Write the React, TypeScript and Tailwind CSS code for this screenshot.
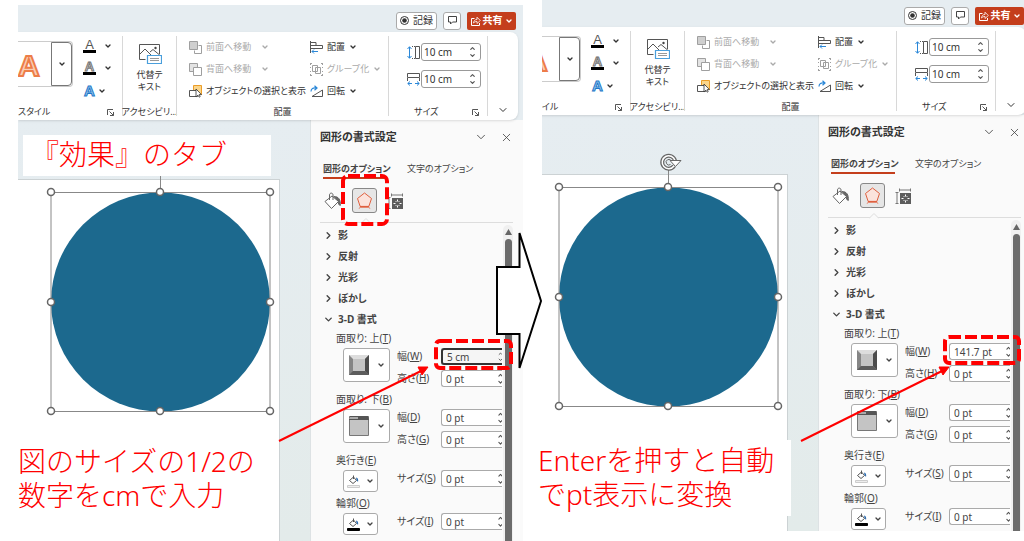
import { useId, type ReactNode } from "react";
import { ChevronDown, ChevronRight, ChevronUp, X } from "lucide-react";

const Chevron = ({ className = "" }: { className?: string }) => (
  <ChevronDown size={8} strokeWidth={4} className={`shrink-0 ${className}`} />
);

const LauncherIcon = () => (
  <svg width="7" height="7" viewBox="0 0 7 7" fill="none" stroke="#555">
    <path d="M.5 6V.5H6M2.5 2.5l4 4M6.5 3v3.5H3" />
  </svg>
);

const BringFrontIcon = () => (
  <svg width="13" height="13" viewBox="0 0 13 13" fill="none" stroke="#888">
    <path d="M9.5 4.5h3v8h-7v-3" />
    <path d="M.5.5h8v8h-8z" fill="#c4c4c4" />
  </svg>
);

const SendBackIcon = () => (
  <svg width="13" height="13" viewBox="0 0 13 13" fill="none" stroke="#888">
    <path d="M.5.5h8v8h-8z" fill="#ddd" />
    <path d="M4.5 4.5h8v8h-8z" fill="#fff" />
  </svg>
);

const SelectionIcon = () => (
  <svg width="13" height="13" viewBox="0 0 13 13" fill="none">
    <path d="M4.5.5h8v9h-8z" fill="#fbd58a" stroke="#eb9d28" />
    <path d="M.5 5.500h8v6h-8z" fill="#fff" stroke="#555" />
    <path d="M7 4v8l2-1.800 1.200 2 1-.6-1-2h2.300z" fill="#fff" stroke="#333" strokeWidth=".8" />
  </svg>
);

const AlignIcon = () => (
  <svg width="13" height="13" viewBox="0 0 13 13" fill="none" stroke="#555">
    <path d="M.5 0v12M1 1.500h5v3H1M1 4.500h11.500v3H1" />
    <path d="M8 10.500H2M4 8.500l-2 2 2 2" stroke="#2b88d8" />
  </svg>
);

const GroupIcon = () => (
  <svg width="13" height="13" viewBox="0 0 13 13" fill="none" stroke="#888">
    <path d="M2.500 2.500h5v6h-5zM5.500 4.500h5v6h-5z" />
    <path d="M0 .5h2M.5 0v2M11 .5h2M12.500 0v2M0 12.500h2M.5 11v2M11 12.500h2M12.500 11v2M.5 4v1M.5 8v1M12.500 4v1M12.500 8v1" />
  </svg>
);

const RotateIcon = () => (
  <svg width="13" height="13" viewBox="0 0 13 13" fill="none">
    <path d="M2 11.500h10.500V5z" stroke="#555" />
    <path d="M1 6.500C1 3.500 3 2.500 6.500 3M4.500.8l2.500 2.200-2.500 2.200" stroke="#2b88d8" strokeWidth="1.200" />
  </svg>
);

const AltTextIcon = () => (
  <svg width="24" height="22" viewBox="0 0 24 22" fill="none">
    <path d="M7.500 16.500h-6v-15h20v10" stroke="#555" />
    <path d="M2 11l5-5 6 6M12 9l3-2.500 6 5" stroke="#555" />
    <circle cx="17.500" cy="5" r="1.200" fill="#444" />
    <path d="M9.500 12.500h14v8h-14z" fill="#fff" stroke="#4a9fdc" strokeWidth="1.200" />
    <path d="M12 15.500h9M12 17.500h9" stroke="#999" />
  </svg>
);

const HeightIcon = () => (
  <svg width="13" height="13" viewBox="0 0 13 13" fill="none">
    <path d="M2.500 1v11M.5 3l2-2.300 2 2.300M.5 10l2 2.300 2-2.300" stroke="#2b88d8" />
    <path d="M8.500.5h4v12h-4z" stroke="#555" />
    <path d="M5 .5h3M5 12.500h3" stroke="#555" strokeDasharray="1 1" />
  </svg>
);

const WidthIcon = () => (
  <svg width="13" height="13" viewBox="0 0 13 13" fill="none">
    <path d="M.5.5h12v4H.5zM.5 5v3M12.500 5v3" stroke="#555" />
    <path d="M1 10.500h4M8 10.500h4M3 8.500l-2.300 2 2.300 2M10 8.500l2.300 2-2.300 2" stroke="#2b88d8" />
  </svg>
);

const ShareIcon = () => (
  <svg width="10" height="10" viewBox="0 0 10 10" fill="none" stroke="#fff">
    <path d="M3.500 2.500h-3v7h8V7" />
    <path d="M2.500 7c.3-2.300 1.500-3.500 3.500-3.500V1.200L9.300 4.500 6 7.500V5.500C4.500 5.500 3.300 6 2.500 7z" strokeWidth=".8" />
  </svg>
);

const BucketIcon = () => (
  <svg width="18" height="18" viewBox="0 0 18 18" fill="none" stroke="#666">
    <path d="M1 9.500L8 4l6.500 5.500L7.500 16.500z" fill="#fff" />
    <path d="M5.500 8V3C5.500.5 9 .5 9 3v5" />
    <path d="M10 4.500c4.500 0 6.800 3 6.300 9-1.500-.5-2.300-2-1.800-4z" fill="#666" />
  </svg>
);

const PentagonIcon = () => (
  <svg width="17" height="18" viewBox="0 0 17 18" fill="none" stroke="#e0603f">
    <path d="M8.500 1l7 5.500-2.700 8h-8.600l-2.700-8z" fill="#fbe3dc" />
    <path d="M4 14.800h9" strokeWidth="1.800" />
    <path d="M4 15l-1 2M13 15l1 2" stroke="#e79b88" />
  </svg>
);

const LayoutIcon = () => (
  <svg width="16" height="16" viewBox="0 0 16 16" fill="none" stroke="#777">
    <path d="M4.500 2h11M4.500.5v3M15.500.5v3M2 4.500v11M.5 4.500h3M.5 15.500h3" />
    <path d="M5 5h11v11H5z" fill="#5c5c5c" stroke="none" />
    <path d="M10.500 6.500v2M10.500 12.500v2M6.500 10.500h2M12.500 10.500h2" stroke="#fff" />
    <path d="M8.500 8h1v1h-1zM11.500 8h1v1h-1zM8.500 12h1v1h-1zM11.500 12h1v1h-1z" fill="#ddd" stroke="none" />
  </svg>
);

const BevelTopIcon = () => (
  <svg width="20" height="20" viewBox="0 0 20 20">
    <path d="M0 0h20v20H0z" fill="#858585" />
    <path d="M0 0h20l-4 4H4z" fill="#ddd" />
    <path d="M20 0v20l-4-4V4z" fill="#4c4c4c" />
    <path d="M0 20h20l-4-4H4z" fill="#5c5c5c" />
    <path d="M4 4h12v12H4z" fill="#c4c4c4" />
  </svg>
);

const BevelBottomIcon = () => (
  <svg width="20" height="20" viewBox="0 0 20 20">
    <path d="M.5.5h19v19H.5z" fill="#c4c4c4" stroke="#777" />
    <path d="M1 0h18l1 4H0z" fill="#555" />
    <path d="M1 1h8v2H0z" fill="#aaa" />
  </svg>
);

const FillIcon = ({ color }: { color: string }) => (
  <svg width="13" height="13" viewBox="0 0 13 13" fill="none">
    <path d="M2.500 5.500L6.500 2l3 3.500-3.500 3z" fill="#fff" stroke="#555" />
    <path d="M6.500 4V.5" stroke="#555" />
    <path d="M9 2.500c2 .5 2.500 2 2 4.500L9.500 5z" fill="#2b6cb0" />
    <path d="M.5 10.500h12v2H.5z" fill={color} stroke={color === "#000" ? "#000" : "#ccc"} />
  </svg>
);

const Spinner = ({ className = "" }: { className?: string }) => (
  <span className={`flex flex-col items-center justify-between py-px text-[#555] ${className}`}>
    <ChevronUp size={7} strokeWidth={4} />
    <ChevronDown size={7} strokeWidth={4} />
  </span>
);

const SizeField = ({ icon, label }: { icon: ReactNode; label: string }) => (
  <label className="flex items-center gap-px">
    {icon}
    <span className="flex h-[18px] w-[60px] rounded-[3px] border border-[#999] bg-white pr-1">
      <input
        aria-label={label}
        defaultValue="10 cm"
        className="w-full min-w-0 bg-transparent pl-0.5 text-[10px] leading-none outline-none"
      />
      <Spinner />
    </span>
  </label>
);

type RibbonButtonProps = {
  icon: ReactNode;
  text: string;
  disabled?: boolean;
  menu?: string;
};

const RibbonButton = ({ icon, text, disabled, menu }: RibbonButtonProps) => (
  <button
    disabled={disabled}
    className="flex h-[22px] items-center gap-1 whitespace-nowrap text-[9px] disabled:text-[#aaa]"
  >
    <span className={disabled ? "opacity-80" : ""}>{icon}</span>
    {text}
    {menu !== undefined && <Chevron className={menu} />}
  </button>
);

const Ribbon = () => (
  <div className="relative z-10 mr-[5px] flex h-[88px] rounded-r-lg bg-white shadow-sm">
    <div className="flex w-[104px] shrink-0 flex-col">
      <div className="flex flex-1 gap-2.5 pt-[3px]">
        <div className="mt-1.5 flex h-[46px] w-[55px] rounded-r border border-l-0 border-[#ccc]">
          <button
            aria-label="ワードアート"
            className="flex-1 text-left font-['Liberation_Sans'] text-[30px] leading-[48px] font-bold text-[#f9cdb5] [-webkit-text-stroke:2px_#ed7d48]"
          >
            A
          </button>
          <button
            aria-label="その他"
            className="flex w-[21px] items-center justify-center rounded-r border border-[#777]"
          >
            <Chevron />
          </button>
        </div>
        <div className="text-center font-['Liberation_Sans'] text-[13px] leading-none">
          <button aria-label="文字の塗りつぶし" className="flex h-[22px] items-center gap-2">
            <span className="w-[13px] border-b-[3px] border-black leading-[10px] text-[#555]">A</span>
            <Chevron />
          </button>
          <button aria-label="文字の輪郭" className="flex h-[22px] items-center gap-2">
            <span className="w-[13px] border-b-[3px] border-black leading-[10px] font-bold text-[#eee] [-webkit-text-stroke:1px_#777]">
              A
            </span>
            <Chevron />
          </button>
          <button aria-label="文字の効果" className="flex h-[23px] items-center gap-0.5">
            <span className="w-[13px] text-[15px] font-bold text-[#9ccbf0] [-webkit-text-stroke:1px_#1f78c8]">
              A
            </span>
            <Chevron />
          </button>
        </div>
      </div>
      <div className="flex h-4 items-center justify-between pr-2 text-[9px]">
        スタイル
        <LauncherIcon />
      </div>
    </div>

    <div className="my-1 w-px shrink-0 bg-[#d8d8d8]" />

    <div className="flex w-[53px] shrink-0 flex-col items-center">
      <button className="flex flex-1 flex-col items-center gap-1 pt-[11px] text-[9px] leading-3">
        <AltTextIcon />
        <span>
          代替テ
          <br />
          キスト
        </span>
      </button>
      <div className="flex h-4 items-center whitespace-nowrap text-[9px]">アクセシビリ…</div>
    </div>

    <div className="my-1 w-px shrink-0 bg-[#d8d8d8]" />

    <div className="flex w-[211px] shrink-0 flex-col">
      <div className="flex flex-1 pt-1 pl-3">
        <div className="w-[121px]">
          <RibbonButton icon={<BringFrontIcon />} text="前面へ移動" disabled menu="ml-1.5" />
          <RibbonButton icon={<SendBackIcon />} text="背面へ移動" disabled menu="ml-1.5" />
          <RibbonButton icon={<SelectionIcon />} text="オブジェクトの選択と表示" />
        </div>
        <div>
          <RibbonButton icon={<AlignIcon />} text="配置" menu="" />
          <RibbonButton icon={<GroupIcon />} text="グループ化" disabled menu="" />
          <RibbonButton icon={<RotateIcon />} text="回転" menu="" />
        </div>
      </div>
      <div className="flex h-4 items-center justify-center text-[9px]">配置</div>
    </div>

    <div className="my-1 w-px shrink-0 bg-[#d8d8d8]" />

    <div className="flex w-[98px] shrink-0 flex-col">
      <div className="flex flex-1 flex-col items-end gap-[9px] pt-[11px] pr-1.5">
        <SizeField icon={<HeightIcon />} label="図形の高さ" />
        <SizeField icon={<WidthIcon />} label="図形の幅" />
      </div>
      <div className="flex h-4 items-center justify-between pr-2 pl-[25px] text-[9px]">
        サイズ
        <LauncherIcon />
      </div>
    </div>

    <div className="my-1 w-px shrink-0 bg-[#d8d8d8]" />

    <button aria-label="リボンを折りたたむ" className="flex flex-1 items-end justify-center pb-1">
      <ChevronDown size={12} />
    </button>
  </div>
);

const TitleBar = () => (
  <div className="flex h-[27px] items-center justify-end gap-1.5 pt-1 pr-[7px] text-[10px]">
    <button className="flex h-[18px] w-[41px] items-center justify-center gap-1 rounded-[3px] border border-[#aaa] bg-white">
      <svg width="9" height="9" viewBox="0 0 9 9">
        <circle cx="4.500" cy="4.500" r="4" fill="none" stroke="#333" />
        <circle cx="4.500" cy="4.500" r="2.300" fill="#333" />
      </svg>
      記録
    </button>
    <button
      aria-label="コメント"
      className="flex h-[18px] w-[18px] items-center justify-center rounded-[3px] border border-[#aaa] bg-white"
    >
      <svg width="9" height="9" viewBox="0 0 9 9" fill="none" stroke="#444">
        <path d="M.5.5h8v5.500H4.500L2.500 8V6h-2z" />
      </svg>
    </button>
    <button className="flex h-[18px] w-[49px] items-center justify-center gap-0.5 rounded-[2px] bg-[#c43e1c] font-bold text-white">
      <ShareIcon />
      共有
      <Chevron />
    </button>
  </div>
);

const Handle = ({ x, y }: { x: number; y: number }) => (
  <circle cx={x} cy={y} r="3.500" fill="#fff" stroke="#666" strokeWidth="1.500" />
);

const SelectedCircle = () => (
  <svg
    width="230"
    height="266"
    viewBox="0 0 230 266"
    fill="none"
    className="absolute -top-[29px] left-7"
  >
    <circle cx="114.500" cy="151" r="109.500" fill="#1c698e" />
    <path d="M5 41.500h219v219H5zM114.500 41V22" stroke="#888" />
    <path d="M120 20a6.500 6.500 0 1 1 1-5.500" stroke="#666" strokeWidth="4" />
    <path d="M120 20a6.500 6.500 0 1 1 1-5.500" stroke="#fff" strokeWidth="1.500" />
    <path d="M116 14.500h11l-5.500 6z" fill="#fff" stroke="#666" />
    <path d="M117.500 15a2.800 2.800 0 1 0-1 3.500" stroke="#666" />
    <Handle x={5} y={41} />
    <Handle x={114} y={41} />
    <Handle x={224} y={41} />
    <Handle x={5} y={151} />
    <Handle x={224} y={151} />
    <Handle x={5} y={260} />
    <Handle x={114} y={260} />
    <Handle x={224} y={260} />
  </svg>
);

const Slide = () => (
  <div className="flex min-w-0 flex-1 bg-linear-to-b from-[#e6edf1] to-[#e3ebea] pt-[59px] pr-[30px]">
    <div className="relative flex-1 border-t border-r border-[#ccd2d4] bg-white">
      <SelectedCircle />
    </div>
  </div>
);

type FieldProps = {
  label: string;
  shortcut: string;
  value?: string;
  focused?: boolean;
};

const Field = ({ label, shortcut, value = "0 pt", focused }: FieldProps) => {
  const id = useId();
  return (
    <div className="flex h-[17px] items-center">
      <label htmlFor={id} className="w-11 whitespace-nowrap">
        {label}(<u>{shortcut}</u>)
      </label>
      <span
        className={
          focused
            ? "flex h-[17px] w-[61px] rounded-l-[3px] border-2 border-r-0 border-[#333] bg-[#f5f5f5]"
            : "flex h-[17px] w-[61px] rounded-l-[3px] border border-r-0 border-[#aaa] bg-white"
        }
      >
        <input
          id={id}
          defaultValue={value}
          className="w-full min-w-0 bg-transparent pl-1 text-[10px] leading-none outline-none"
        />
        <Spinner className="w-1 shrink-0 overflow-hidden" />
      </span>
    </div>
  );
};

type SettingProps = {
  label: string;
  shortcut: string;
  icon: ReactNode;
  small?: boolean;
  children: ReactNode;
};

const Setting = ({ label, shortcut, icon, small, children }: SettingProps) => (
  <div className={small ? "h-[43px] pl-[25px]" : "h-[61px] pl-[25px]"}>
    <div className="h-[18px] leading-4">
      {label}(<u>{shortcut}</u>)
    </div>
    <div className="flex pl-[7px]">
      <div className="w-[54px]">
        <button
          aria-label={label}
          className={
            small
              ? "flex h-[22px] w-[35px] items-center justify-center gap-1.5 rounded-[3px] border border-[#aaa] bg-white"
              : "flex h-[34px] w-[47px] items-center justify-center gap-2 rounded-[3px] border border-[#aaa] bg-white"
          }
        >
          {icon}
          <Chevron />
        </button>
      </div>
      <div className="flex flex-col gap-[5px]">{children}</div>
    </div>
  </div>
);

const sections = ["影", "反射", "光彩", "ぼかし"];

type WindowProps = {
  bevel: string;
  focused?: boolean;
  marks: ReactNode;
};

const FormatPane = ({ bevel, focused, marks }: WindowProps) => (
  <aside className="relative flex w-[213px] shrink-0 flex-col border-l border-[#dde2e4] bg-[#fafafa] text-[10px] text-[#444]">
    <div className="flex h-[34px] shrink-0 items-center pl-[9px]">
      <h2 className="flex-1 text-[11px] font-bold text-[#333]">図形の書式設定</h2>
      <button aria-label="作業ウィンドウ オプション" className="mr-3">
        <ChevronDown size={14} strokeWidth={1.5} />
      </button>
      <button aria-label="閉じる" className="mr-2.5">
        <X size={13} strokeWidth={1.5} />
      </button>
    </div>
    <div className="flex h-[25px] shrink-0 gap-5 pl-3 text-[9px]">
      <button className="w-16 border-b-2 border-[#c43e1c] pt-1.5 font-bold whitespace-nowrap">
        図形のオプション
      </button>
      <button className="pt-1 whitespace-nowrap">文字のオプション</button>
    </div>
    <div className="mr-2.5 ml-[9px] flex h-11 shrink-0 items-center gap-2.5 border-b border-[#ddd] pl-1">
      <button aria-label="塗りつぶしと線">
        <BucketIcon />
      </button>
      <button
        aria-label="効果"
        className="flex h-[25px] w-[25px] items-center justify-center rounded-[3px] border border-[#888] bg-[#e6e6e6]"
      >
        <PentagonIcon />
      </button>
      <button aria-label="サイズとプロパティ">
        <LayoutIcon />
      </button>
    </div>
    <svg
      width="10"
      height="6"
      viewBox="0 0 10 6"
      fill="#fafafa"
      stroke="#ddd"
      className="absolute top-[98px] left-[50px]"
    >
      <path d="M0 5.500L5 .5l5 5" />
    </svg>

    <div className="flex flex-1 pt-0.5">
      <div className="w-[192px] overflow-hidden">
        {sections.map((name) => (
          <button key={name} className="flex h-[21px] w-full items-center gap-1 pl-3 font-bold">
            <ChevronRight size={11} strokeWidth={3} />
            {name}
          </button>
        ))}
        <button className="flex h-[21px] w-full items-center gap-1 pl-3 font-bold">
          <ChevronDown size={11} strokeWidth={3} />
          3-D 書式
        </button>
        <Setting label="面取り: 上" shortcut="T" icon={<BevelTopIcon />}>
          <Field label="幅" shortcut="W" value={bevel} focused={focused} />
          <Field label="高さ" shortcut="H" />
        </Setting>
        <Setting label="面取り: 下" shortcut="B" icon={<BevelBottomIcon />}>
          <Field label="幅" shortcut="D" />
          <Field label="高さ" shortcut="G" />
        </Setting>
        <Setting label="奥行き" shortcut="E" icon={<FillIcon color="#eee" />} small>
          <Field label="サイズ" shortcut="S" />
        </Setting>
        <Setting label="輪郭" shortcut="O" icon={<FillIcon color="#000" />} small>
          <Field label="サイズ" shortcut="I" />
        </Setting>
      </div>
      <div className="flex w-2.5 flex-col items-center rounded-t-full bg-[#f0f0f0] pt-1">
        <svg width="7" height="6" viewBox="0 0 7 6">
          <path d="M3.500 0L7 6H0z" fill="#666" />
        </svg>
        <div className="mt-1 w-[7px] flex-1 rounded-t-full bg-[#6b6b6b]" />
      </div>
    </div>
    {marks}
  </aside>
);

const PowerPointWindow = (props: WindowProps) => (
  <div className="flex h-full flex-col bg-[#e6edf1]">
    <TitleBar />
    <Ribbon />
    <div className="flex min-h-0 flex-1">
      <Slide />
      <FormatPane {...props} />
    </div>
  </div>
);

// Drawn from 40px left of the pane so the pointer can start over the slide
const LeftMarks = () => (
  <svg
    width="260"
    height="340"
    viewBox="-40 0 260 340"
    fill="none"
    stroke="#f00"
    className="pointer-events-none absolute top-0 -left-[41px]"
  >
    <rect x="33" y="56" width="44" height="48" rx="5" strokeWidth="4" strokeDasharray="12 4" />
    <rect x="126" y="221" width="75" height="27" rx="4" strokeWidth="4" strokeDasharray="12 4" />
    <path d="M-31 321L111 251" strokeWidth="2" />
    <path d="M118 247l-6 8-4-8z" fill="#f00" />
  </svg>
);

const RightMarks = () => (
  <svg
    width="260"
    height="340"
    viewBox="-40 0 260 340"
    fill="none"
    stroke="#f00"
    className="pointer-events-none absolute top-0 -left-[41px]"
  >
    <rect x="127" y="222" width="74" height="26" rx="4" strokeWidth="4" strokeDasharray="12 4" />
    <path d="M-17 326L124 256" strokeWidth="2" />
    <path d="M131 252l-6 8-4-8z" fill="#f00" />
  </svg>
);

const App = () => {
  return (
    <div className="flex h-screen gap-[19px] overflow-hidden bg-white pl-[18px] font-['Noto_Sans','Noto_Sans_CJK_JP',sans-serif] text-[#333] [font-feature-settings:'palt']">
      <div className="relative min-w-0 flex-[505] pt-[5px]">
        <div className="h-full overflow-hidden">
          <PowerPointWindow bevel="5 cm" focused marks={<LeftMarks />} />
        </div>
        <p className="absolute top-[135px] left-[5px] z-10 h-[41px] w-[248px] bg-white pl-2 text-[28px] leading-[38px] font-light text-[#f00] [font-feature-settings:normal]">
          『効果』のタブ
        </p>
        <p className="absolute top-[444px] left-0 text-[28px] leading-[34px] font-light whitespace-nowrap text-[#f00] [font-feature-settings:normal]">
          図のサイズの1/2の
          <br />
          数字をcmで入力
        </p>
        <svg
          width="48"
          height="142"
          viewBox="0 0 48 142"
          fill="#fff"
          stroke="#000"
          strokeWidth="2"
          className="absolute top-[230px] -right-5 z-20"
        >
          <path d="M2 37h22.500V3L46 71l-21.500 67v-34H2z" />
        </svg>
      </div>

      <div className="relative min-w-0 flex-[482] pb-2.5">
        <div className="h-full overflow-hidden">
          <div className="-mr-[7px] -ml-4 h-full">
            <PowerPointWindow bevel="141.7 pt" marks={<RightMarks />} />
          </div>
        </div>
        <p className="absolute top-[440px] -left-1 h-[76px] w-[253px] bg-white pt-[3px] text-[28px] leading-[34px] font-light whitespace-nowrap text-[#f00] [font-feature-settings:normal]">
          Enterを押すと自動
          <br />
          でpt表示に変換
        </p>
      </div>
    </div>
  );
};

export default App;
